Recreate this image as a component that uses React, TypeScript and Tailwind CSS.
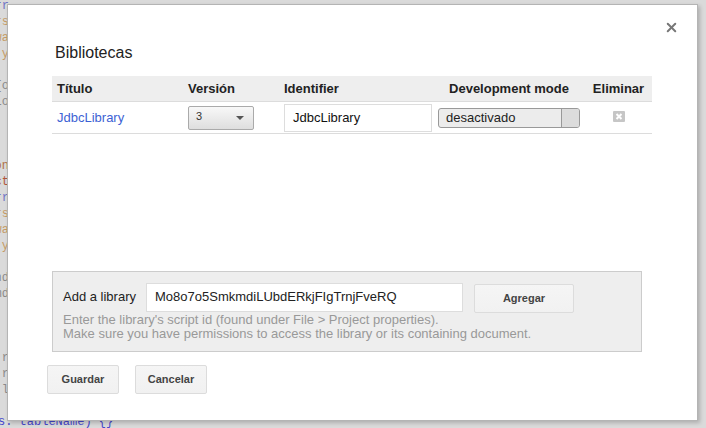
import { X } from "lucide-react";

type CodeLine = { text: string; color: string };

// the editor that sits behind the modal, only its right-hand edge shows
const codeLines: CodeLine[] = [
  { text: "  var conn = Jdbc.getCloudSqlConnection(dbUrl, user, userPwd);", color: "#9a9a9a" },
  { text: "  var dbUrr", color: "#6f74c4" },
  { text: "  var users", color: "#c49a66" },
  { text: "  var userPwa", color: "#c49a66" },
  { text: "  var y", color: "#c49a66" },
  { text: "", color: "#888" },
  { text: "function createDatabase() {o", color: "#8a8a8a" },
  { text: "  Jdbc.getCloudSqlConnectio", color: "#8a8a8a" },
  { text: "", color: "#888" },
  { text: "", color: "#888" },
  { text: "", color: "#888" },
  { text: "// Crea una conexión", color: "#b07048" },
  { text: "  var connect", color: "#b0563c" },
  { text: "  var dbUrr", color: "#6f74c4" },
  { text: "  var users", color: "#c49a66" },
  { text: "  var userPwa", color: "#c49a66" },
  { text: "  var y", color: "#c49a66" },
  { text: "", color: "#888" },
  { text: "  var connd", color: "#8a8a8a" },
  { text: "  var stmd", color: "#8a8a8a" },
  { text: "", color: "#888" },
  { text: "", color: "#888" },
  { text: "", color: "#888" },
  { text: "  for (var r", color: "#8a8a8a" },
  { text: "  for (var r", color: "#8a8a8a" },
  { text: "  stmt.l", color: "#8a8a8a" },
  { text: "", color: "#888" },
];

function DeleteIcon() {
  return (
    <svg width="12" height="11" viewBox="0 0 12 11">
      <rect x="0" y="0" width="12" height="11" rx="1" fill="#c6c6c6" />
      <path d="M3.5 3 L8.5 8 M8.5 3 L3.5 8" stroke="#fff" strokeWidth="2" />
    </svg>
  );
}

function Button({ label, className }: { label: string; className?: string }) {
  return (
    <button
      className={
        "flex h-[29px] items-center justify-center rounded-[2px] border border-[#dcdcdc] bg-gradient-to-b from-[#f5f5f5] to-[#f1f1f1] text-[11px] font-bold text-[#444] " +
        (className ?? "")
      }
    >
      {label}
    </button>
  );
}

export default function App() {
  return (
    <div className="relative h-[428px] w-[706px] overflow-hidden bg-[#dadada] font-['Liberation_Sans',Arial,sans-serif]">
      {/* editor behind the backdrop */}
      <div className="-mt-[18px] flex flex-col font-['Liberation_Mono','Courier_New',monospace] text-[12px] leading-[16px]">
        {codeLines.map((line, index) => (
          <div key={index} className="flex h-[16px] w-[9px] justify-end whitespace-pre" style={{ color: line.color }}>
            {line.text}
          </div>
        ))}
        <div className="-ml-[2px] mt-[0px] h-[16px] whitespace-pre text-[#4646cc]">s. tableName) {"{}"}</div>
      </div>

      {/* dialog */}
      <div className="absolute left-[7px] top-[4px] flex h-[417px] w-[691px] flex-col border border-[#b4b4b4] bg-white pl-[44px] pt-[39px] shadow-[2px_2px_4px_rgba(0,0,0,0.2)]">
        <X className="absolute right-[18px] top-[15px] h-[15px] w-[15px] text-[#777]" strokeWidth={3.2} />

        <h2 className="ml-[3px] text-[16px] leading-[18px] text-[#222]">Bibliotecas</h2>

        <div className="mt-[14px] w-[600px] text-[13px] text-[#222]">
          <div className="grid h-[26px] grid-cols-[131px_96px_154px_152px_67px] items-center border-b border-[#dcdcdc] bg-[#eee] font-bold">
            <div className="pl-[5px]">Título</div>
            <div className="pl-[5px]">Versión</div>
            <div className="pl-[5px]">Identifier</div>
            <div className="text-center">Development mode</div>
            <div className="text-center">Eliminar</div>
          </div>
          <div className="grid h-[32px] grid-cols-[131px_96px_154px_152px_67px] items-center border-b border-[#dcdcdc]">
            <div className="pl-[5px] text-[#3d62d4]">JdbcLibrary</div>
            <div className="pl-[5px]">
              <div className="flex h-[24px] w-[66px] items-center justify-between rounded-[2px] border border-[#aaa] bg-gradient-to-b from-[#f8f8f8] to-[#dedede] pl-[7px] pr-[9px]">
                <span className="-mt-[3px] text-[11px] text-[#333]">3</span>
                <svg width="8" height="4" viewBox="0 0 8 4">
                  <path d="M0 0 H8 L4 4 Z" fill="#555" />
                </svg>
              </div>
            </div>
            <div className="pl-[5px]">
              <div className="flex h-[28px] w-[148px] items-center border border-[#ddd] bg-white pl-[8px] text-[13px] text-[#111]">
                JdbcLibrary
              </div>
            </div>
            <div className="flex justify-center">
              <div className="flex h-[20px] w-[142px] items-stretch overflow-hidden rounded-[3px] border border-[#999] bg-[#ececec]">
                <div className="flex flex-1 items-center pl-[7px] text-[13px] text-[#222]">desactivado</div>
                <div className="w-[18px] border-l border-[#999] bg-[#dcdcdc]" />
              </div>
            </div>
            <div className="flex justify-center pb-[2px]">
              <DeleteIcon />
            </div>
          </div>
        </div>

        <div className="mt-[137px] w-[590px] border border-[#ccc] bg-[#eee] pb-[10px] pl-[10px] pt-[10px] text-[13px]">
          <div className="flex h-[30px] items-center">
            <div className="w-[83px] text-[#222]">Add a library</div>
            <div className="flex h-[29px] w-[317px] items-center border border-[#ddd] bg-white pl-[8px] text-[#222]">
              Mo8o7o5SmkmdiLUbdERkjFIgTrnjFveRQ
            </div>
            <Button label="Agregar" className="ml-[11px] mt-[2px] w-[100px] from-[#f3f3f3] to-[#f1f1f1]" />
          </div>
          <div className="mt-[1px] leading-[14px] text-[#999]">
            <div>Enter the library's script id (found under File &gt; Project properties).</div>
            <div>Make sure you have permissions to access the library or its containing document.</div>
          </div>
        </div>

        <div className="-ml-[5px] mt-[13px] flex gap-[16px]">
          <Button label="Guardar" className="w-[72px]" />
          <Button label="Cancelar" className="w-[72px]" />
        </div>
      </div>
    </div>
  );
}
